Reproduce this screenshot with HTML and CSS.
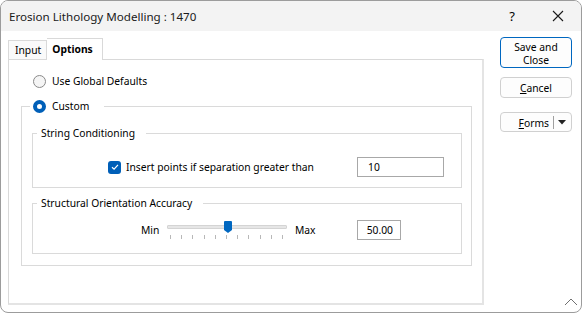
FILE: index.html
```html
<!DOCTYPE html>
<html>
<head>
<meta charset="utf-8">
<link rel="stylesheet" href="styles.css">
</head>
<body>
<div class="window">
  <div class="titlebar">
    <span class="title">Erosion Lithology Modelling : 1470</span>
    <span class="help">?</span>
    <span class="close"><svg width="12" height="12" viewBox="0 0 12 12"><path d="M1 1 L11 11 M11 1 L1 11" stroke="#1a1a1a" stroke-width="1.1" fill="none"/></svg></span>
  </div>
  <div class="main">
    <div class="tabarea">
      <div class="tabs">
        <div class="tab">Input</div>
        <div class="tab active">Options</div>
      </div>
      <div class="panel">
        <div class="radio-row">
          <span class="radio"></span><span>Use Global Defaults</span>
        </div>
        <fieldset class="group custom">
          <legend class="custom-legend"><span class="radio checked"></span><span>Custom</span></legend>
          <fieldset class="group inner">
            <legend class="inner-legend">String Conditioning</legend>
            <div class="row string-row">
              <span class="check"><svg width="12" height="12" viewBox="0 0 12 12"><path d="M3 6.2 L5.1 8.2 L9 3.9" stroke="#fff" stroke-width="1.2" fill="none"/></svg></span>
              <span class="label">Insert points if separation greater than</span>
              <span class="textbox">10</span>
            </div>
          </fieldset>
          <fieldset class="group inner structural">
            <legend class="inner-legend">Structural Orientation Accuracy</legend>
            <div class="row slider-row">
              <span class="minmax">Min</span>
              <div class="slider">
                <div class="track"></div>
                <div class="thumb"><svg width="8" height="12" viewBox="0 0 8 12"><path d="M0 1 Q0 0 1 0 L7 0 Q8 0 8 1 L8 9 L4 12 L0 9 Z" fill="#0067c0"/></svg></div>
                <div class="ticks"><i></i><i></i><i></i><i></i><i></i><i></i><i></i><i></i><i></i><i></i><i></i></div>
              </div>
              <span class="minmax max">Max</span>
              <span class="textbox num">50.00</span>
            </div>
          </fieldset>
        </fieldset>
      </div>
    </div>
    <div class="buttons">
      <div class="btn primary">Save and<br>Close</div>
      <div class="btn cancel"><u>C</u>ancel</div>
      <div class="btn forms"><span class="forms-text"><u>F</u>orms</span><span class="sep"></span><svg width="8" height="5" viewBox="0 0 8 5"><path d="M0 0 L8 0 L4 4.5 Z" fill="#222"/></svg></div>
    </div>
  </div>
  <svg class="grip" width="14" height="8" viewBox="0 0 14 8"><path d="M1 7 L7 1 L13 7" stroke="#707070" stroke-width="1" fill="none"/></svg>
</div>
</body>
</html>
```
FILE: styles.css
```css
* { box-sizing: border-box; }
html, body { margin: 0; padding: 0; background: #fff; }
body {
  width: 582px; height: 313px; overflow: hidden;
  font-family: "Noto Sans", "Open Sans", sans-serif;
  font-size: 10.3px; color: #000;
}
.window {
  position: relative;
  width: 582px; height: 313px;
  border: 1px solid #9c9c9c;
  border-radius: 8px;
  overflow: hidden;
  background: #fff;
}
.titlebar {
  height: 30px;
  background: #f3f3f3;
  display: flex; align-items: center;
  padding-left: 8px;
}
.title { flex: 1; font-size: 11.6px; color: #1a1a1a; }
.help { width: 46px; text-align: center; font-size: 13px; }
.close { width: 46px; display: flex; justify-content: center; align-items: center; }

.main { display: flex; padding: 6px 0 0 7px; }
.tabarea { width: 476px; }
.tabs { display: flex; align-items: flex-end; height: 22px; }
.tab {
  height: 19px; padding: 0 5px 0 6px; line-height: 18px;
  border: 1px solid #d9d9d9; border-bottom: none;
  background: #fafafa;
}
.tab.active {
  height: 22px; line-height: 21px; font-weight: bold; background: #fff;
  border-left: none; padding: 0 9px 0 5px;
  margin-bottom: -1px; position: relative;
}
.panel {
  height: 246px;
  border: 1px solid #d9d9d9;
  border-right: 2px solid #e4e4e4;
  border-bottom: 2px solid #e4e4e4;
  padding: 13px 10px 0 12px;
}
.radio-row { display: flex; align-items: center; height: 16px; padding-left: 12px; gap: 6px; }
.radio {
  width: 13px; height: 13px; border-radius: 50%;
  border: 1px solid #8a8a8a; background: #f5f5f5; display: inline-block; flex: none;
}
.radio.checked { border: 4px solid #005fb8; background: #fff; }

.group {
  margin: 0; min-width: 0;
  border: 1px solid #dadada;
}
.custom-legend, .inner-legend { line-height: 16px; height: 16px; }
.custom { margin-top: 9px; padding: 11px 9px 11px 10px; }
.custom-legend { display: flex; align-items: center; gap: 6px; margin-left: -2px; padding: 0 15px 0 3px; }
.inner { padding: 16px 17px 10px 0; }
.inner-legend { margin-left: 4px; padding: 0 11px 0 4px; }
.structural { margin-top: 7px; padding: 9px 0 13px 0; }

.row { display: flex; align-items: center; }
.string-row { padding-left: 75px; }
.check {
  width: 13px; height: 13px; border-radius: 3px; background: #005fb8;
  display: flex; align-items: center; justify-content: center; margin-right: 5px;
}
.label { flex: 1; }
.textbox {
  width: 87px; height: 20px; border: 1px solid #a8a8a8;
  padding: 0 0 0 10px; line-height: 18px;
}
.textbox.num { width: 44px; text-align: right; padding: 0 7px 0 0; }

.slider-row { padding-left: 108px; }
.minmax { width: 26px; }
.max { width: 62px; margin-left: 8px; }
.slider { position: relative; width: 120px; height: 20px; }
.track {
  position: absolute; left: 0; right: 0; top: 5px; height: 4px;
  background: #e6e6e6; border: 1px solid #d4d4d4; border-radius: 1px;
}
.thumb { position: absolute; left: 57px; top: 1px; line-height: 0; }
.ticks {
  position: absolute; left: 3px; width: 113px; top: 15px;
  display: flex; justify-content: space-between;
}
.ticks i { width: 1px; height: 4px; background: #b8b8b8; }

.buttons { margin-left: 16px; width: 72px; display: flex; flex-direction: column; }
.btn {
  border: 1px solid #d0d0d0; border-radius: 4px; background: #fdfdfd;
  text-align: center; line-height: 13px;
}
.btn.primary { height: 31px; border-color: #0067c0; padding-top: 3px; }
.btn.cancel { height: 21px; margin-top: 9px; line-height: 21px; }
.btn.forms {
  height: 20px; margin-top: 14px; display: flex; align-items: center; justify-content: flex-end;
  padding: 2px 5px 0 0;
}
.forms-text { margin-right: 4px; }
.sep { width: 1px; height: 13px; background: #a0a0a0; margin-right: 4px; margin-top: -2px; }
.btn.forms svg { margin-top: -2px; }
.grip { position: absolute; right: 3px; bottom: 6px; }
```
